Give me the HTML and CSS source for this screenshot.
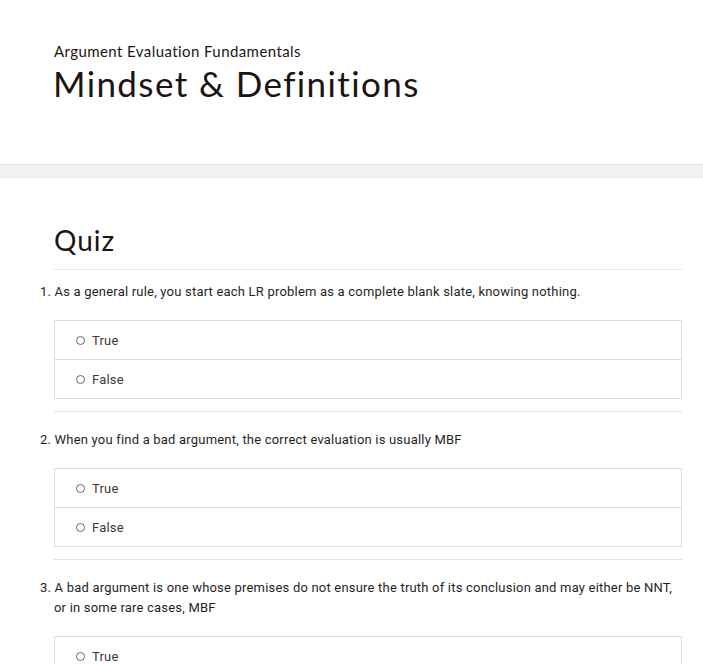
FILE: index.html
```html
<!DOCTYPE html>
<html lang="en">
<head>
<meta charset="utf-8">
<title>Mindset &amp; Definitions</title>
<link rel="stylesheet" href="styles.css">
</head>
<body>
<header class="page-header">
  <div class="course">Argument Evaluation Fundamentals</div>
  <h1 class="lesson-title">Mindset &amp; Definitions</h1>
</header>
<div class="band"></div>
<main class="content">
  <h2 class="quiz-title">Quiz</h2>
  <div class="question first">
    <p class="q-text">1. As a general rule, you start each LR problem as a complete blank slate, knowing nothing.</p>
    <ul class="options">
      <li class="option"><span class="radio"></span>True</li>
      <li class="option"><span class="radio"></span>False</li>
    </ul>
  </div>
  <div class="question">
    <p class="q-text">2. When you find a bad argument, the correct evaluation is usually MBF</p>
    <ul class="options">
      <li class="option"><span class="radio"></span>True</li>
      <li class="option"><span class="radio"></span>False</li>
    </ul>
  </div>
  <div class="question">
    <p class="q-text">3. A bad argument is one whose premises do not ensure the truth of its conclusion and may either be NNT, or in some rare cases, MBF</p>
    <ul class="options">
      <li class="option"><span class="radio"></span>True</li>
      <li class="option"><span class="radio"></span>False</li>
    </ul>
  </div>
</main>
</body>
</html>
```
FILE: styles.css
```css
html, body {
  margin: 0;
  padding: 0;
  background: #ffffff;
}
body {
  font-family: Roboto, "Liberation Sans", sans-serif;
  color: #1f1f1f;
}
.page-header {
  height: 164px;
  box-sizing: border-box;
  padding: 42px 0 0 54px;
}
.course {
  font-family: Lato, "Open Sans", sans-serif;
  font-size: 15px;
  line-height: 18px;
  color: #1a1414;
  letter-spacing: 0.42px;
}
.lesson-title {
  margin: 3px 0 0 -1px;
  font-family: Lato, "Open Sans", sans-serif;
  font-weight: 400;
  font-size: 35px;
  line-height: 40px;
  color: #1a1414;
  letter-spacing: 1.4px;
}
.band {
  height: 12px;
  background: #f2f2f2;
  border-top: 1px solid #e3e3e3;
  border-bottom: 1px solid #ececec;
}
.content {
  padding: 44px 21px 0 40px;
}
.quiz-title {
  margin: 0 0 0 14px;
  font-family: Lato, "Open Sans", sans-serif;
  font-weight: 400;
  font-size: 28px;
  line-height: 36px;
  letter-spacing: 1px;
  color: #1a1414;
  padding-bottom: 11px;
  border-bottom: 1px solid #e6e6e6;
}
.question {
  border-bottom: 1px solid #e2e2e2;
  margin-left: 14px;
  padding-bottom: 12px;
  padding-top: 18px;
}
.question.first {
  padding-top: 12px;
}
.q-text {
  margin: 0 0 18px -14px;
  padding-left: 14px;
  text-indent: -14px;
  font-size: 13px;
  line-height: 20px;
  letter-spacing: 0.2px;
  color: #1f1f1f;
}
.options {
  list-style: none;
  margin: 0;
  padding: 0;
  border: 1px solid #dddddd;
}
.option {
  height: 38px;
  display: flex;
  align-items: center;
  padding-left: 21px;
  font-size: 13px;
  letter-spacing: 0.2px;
  color: #3a3a3a;
}
.option + .option {
  border-top: 1px solid #dddddd;
}
.radio {
  width: 7px;
  height: 7px;
  border: 1px solid #666666;
  border-radius: 50%;
  margin-right: 7px;
  flex: none;
}
```
